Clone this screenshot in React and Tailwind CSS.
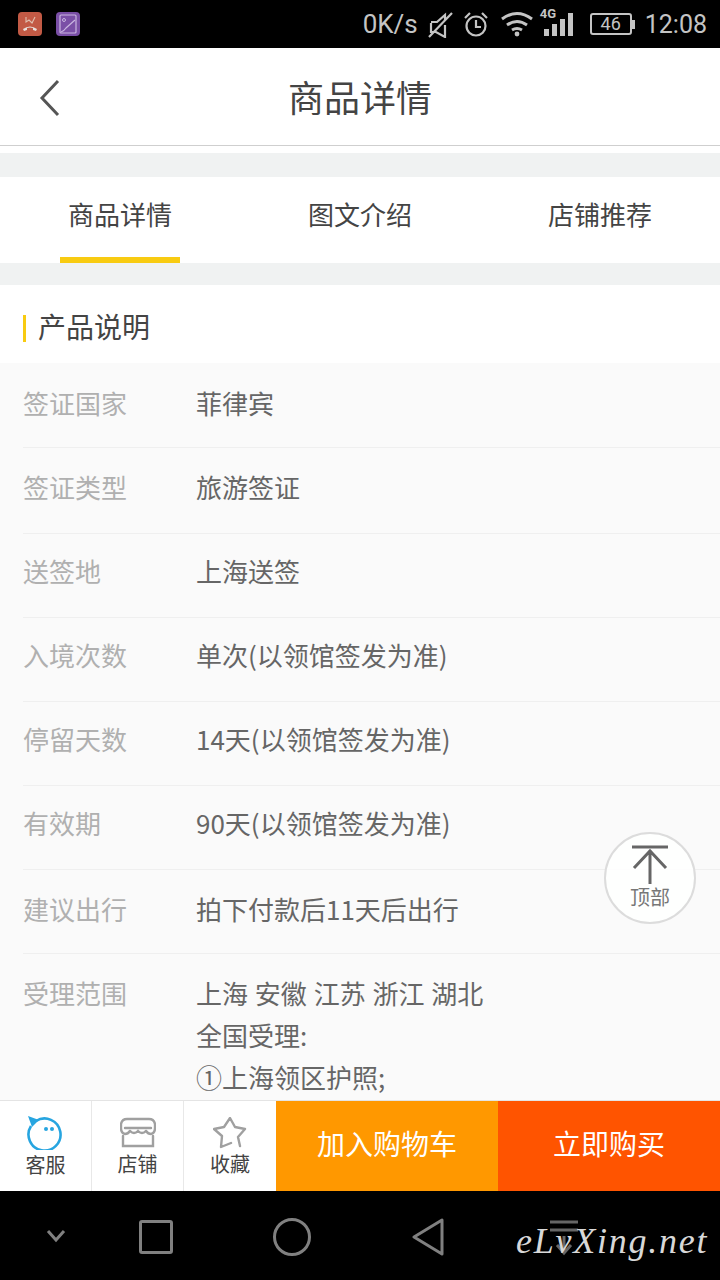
import React from "react";

const font = { fontFamily: '"Noto Sans CJK SC", "Noto Sans", sans-serif' };

const rows = [
  { label: "签证国家", lines: ["菲律宾"], box: "h-[85px] pt-[26px] border-b" },
  { label: "签证类型", lines: ["旅游签证"], box: "h-[86px] pt-[25px] border-b" },
  { label: "送签地", lines: ["上海送签"], box: "h-[84px] pt-[23px] border-b" },
  { label: "入境次数", lines: ["单次(以领馆签发为准)"], box: "h-[84px] pt-[23px] border-b" },
  { label: "停留天数", lines: ["14天(以领馆签发为准)"], box: "h-[84px] pt-[23px] border-b" },
  { label: "有效期", lines: ["90天(以领馆签发为准)"], box: "h-[84px] pt-[23px] border-b" },
  { label: "建议出行", lines: ["拍下付款后11天后出行"], box: "h-[84px] pt-[25px] border-b" },
  { label: "受理范围", lines: ["上海 安徽 江苏 浙江 湖北", "全国受理:", "①上海领区护照;"], box: "pt-[25px]" },
];

function StatusBar() {
  return (
    <div className="h-12 shrink-0 bg-black flex items-center justify-between pl-[18px] pr-[13px]">
      <div className="flex gap-[14px]">
        <svg width="24" height="24" viewBox="0 0 24 24">
          <rect width="24" height="24" rx="4" fill="#c25a45" />
          <path d="M5 17q7-5 14 0l-1 2-3-1v-2q-3-1-6 0v2l-3 1z" fill="#e8e0dc" />
          <path d="M8 5v5l3-2 3 3 3-6" stroke="#e0c0b0" strokeWidth="1.1" fill="none" />
        </svg>
        <svg width="24" height="24" viewBox="0 0 24 24">
          <rect width="24" height="24" rx="4" fill="#7a4fa6" />
          <rect x="4" y="3" width="16" height="18" rx="1" fill="none" stroke="#c9b5e0" strokeWidth="1.2" />
          <path d="M5 20q3-1 5-4l9-8" fill="none" stroke="#c9b5e0" strokeWidth="1.2" />
          <circle cx="8" cy="8" r="1.5" fill="none" stroke="#c9b5e0" />
        </svg>
      </div>
      <div className="flex items-center text-[#c4c4c4]">
        <span className="text-[26px] leading-none font-['Roboto'] mr-[10px]">0K/s</span>
        <svg width="25" height="28" viewBox="0 0 25 28" fill="none" stroke="#c4c4c4" strokeWidth="2.2" className="mr-[10px]">
          <path d="M3 13v9h5l9 5V15M17 10V5l-8 7H3M1 27L24 3" />
        </svg>
        <svg width="26" height="28" viewBox="0 0 26 28" fill="none" stroke="#c4c4c4" strokeWidth="2.2" className="mr-[11px]">
          <circle cx="13" cy="16" r="9.5" />
          <path d="M13 10v7h5M2 8l5-5M24 8l-5-5" />
        </svg>
        <svg width="34" height="26" viewBox="0 0 34 26" fill="none" stroke="#c4c4c4" strokeWidth="3" className="mr-[6px]">
          <path d="M2 8q15-11 30 0M7 14q10-7 20 0M12 19q5-3 10 0" />
          <circle cx="17" cy="23" r="2.4" fill="#c4c4c4" stroke="none" />
        </svg>
        <div className="relative w-[34px] h-[28px] mb-[4px] mr-[16px]">
          <span className="absolute -top-[1px] left-0 text-[13px] leading-none font-bold font-['Roboto']">4G</span>
          <div className="absolute bottom-0 left-[4px] flex items-end gap-[3px]">
            <div className="w-[5px] h-[7px] bg-[#c4c4c4]" />
            <div className="w-[5px] h-[12px] bg-[#c4c4c4]" />
            <div className="w-[5px] h-[17px] bg-[#c4c4c4]" />
            <div className="w-[5px] h-[23px] bg-[#c4c4c4]" />
          </div>
        </div>
        <div className="w-[42px] h-[22px] border-2 border-[#c4c4c4] rounded-[3px] flex items-center justify-center text-[18px] leading-none font-['Roboto']">46</div>
        <div className="w-[3px] h-[9px] bg-[#c4c4c4] mr-[10px]" />
        <span className="text-[25px] leading-none font-['Roboto']">12:08</span>
      </div>
    </div>
  );
}

function Header() {
  return (
    <div className="h-[98px] shrink-0 bg-white border-b border-[#cfcfcf] flex items-center justify-center relative pb-[1px]">
      <svg width="24" height="38" viewBox="0 0 24 38" fill="none" stroke="#555" strokeWidth="3" className="absolute left-[38px] top-[31px]">
        <path d="M20 2L4 19l16 17" />
      </svg>
      <span className="text-[36px] leading-none text-[#444]">商品详情</span>
    </div>
  );
}

function Tabs() {
  return (
    <div className="h-[86px] shrink-0 bg-white flex">
      {["商品详情", "图文介绍", "店铺推荐"].map((t, i) => (
        <div key={t} className="flex-1 flex flex-col items-center justify-between">
          <span className="text-[26px] leading-none text-[#444] mt-[24px]">{t}</span>
          {i === 0 ? <div className="w-[120px] h-[6px] bg-[#f8cb11]" /> : null}
        </div>
      ))}
    </div>
  );
}

function Row({ label, lines, box }) {
  return (
    <div className={"flex ml-[23px] border-[#efefef] " + box}>
      <div className="w-[173px] shrink-0 text-[26px] leading-[28px] text-[#b0b0b0]">{label}</div>
      <div className="text-[26px] text-[#666] [word-spacing:1px]">
        {lines.map((l) => (
          <div key={l} className="leading-[28px] h-[42px]">{l}</div>
        ))}
      </div>
    </div>
  );
}

function BottomBar() {
  return (
    <div className="h-[91px] shrink-0 flex bg-white border-t border-[#e4e4e4] relative z-10">
      <div className="w-[92px] border-r border-[#e8e8e8] flex flex-col items-center pt-[15px]">
        <svg width="38" height="34" viewBox="0 0 38 34" fill="none">
          <path d="M9 5a16 16 0 1 1-5 5" stroke="#27a5e0" strokeWidth="2.6" />
          <path d="M1 0l11 4-7 7z" fill="#27a5e0" />
          <circle cx="19" cy="13" r="2" fill="#27a5e0" />
          <circle cx="25" cy="13" r="2" fill="#27a5e0" />
        </svg>
        <span className="text-[20px] leading-none text-[#444] mt-[5px]">客服</span>
      </div>
      <div className="w-[92px] border-r border-[#e8e8e8] flex flex-col items-center pt-[16px]">
        <svg width="36" height="31" viewBox="0 0 36 31" fill="none" stroke="#a0a0a0" strokeWidth="2.4" strokeLinecap="round">
          <path d="M7 2h22q5 0 6 5v4q0 5-4 6-3 0-5-3M7 2q-5 0-6 5v4q0 5 4 6 3 0 5-3" />
          <path d="M5 11h26M10 14q4 4 8 0q4 4 8 0M3 19v10h30V19" />
        </svg>
        <span className="text-[20px] leading-none text-[#444] mt-[6px]">店铺</span>
      </div>
      <div className="w-[92px] flex flex-col items-center pt-[16px]">
        <svg width="34" height="32" viewBox="0 0 34 32" fill="none" stroke="#a0a0a0" strokeWidth="2.4" strokeLinejoin="round" strokeLinecap="round">
          <path d="M18 26L8 30l1-11-8-7 10-2 6-9 5 9 10 2-7 8 2 9" />
        </svg>
        <span className="text-[20px] leading-none text-[#444] mt-[5px]">收藏</span>
      </div>
      <div className="w-[222px] bg-[#ff9800] flex items-center justify-center text-white text-[28px] leading-none pb-[6px]">加入购物车</div>
      <div className="w-[222px] bg-[#ff5400] flex items-center justify-center text-white text-[28px] leading-none pb-[6px]">立即购买</div>
    </div>
  );
}

function NavBar() {
  return (
    <div className="h-[89px] shrink-0 bg-black relative">
      <svg width="20" height="14" viewBox="0 0 20 14" fill="none" stroke="#808080" strokeWidth="3" className="absolute left-[46px] top-[38px]">
        <path d="M2 2l8 9 8-9" />
      </svg>
      <div className="absolute left-[139px] top-[29px] w-[34px] h-[34px] border-[3px] border-[#808080] rounded-[3px]" />
      <div className="absolute left-[273px] top-[27px] w-[38px] h-[38px] border-[3px] border-[#808080] rounded-full" />
      <svg width="34" height="38" viewBox="0 0 34 38" fill="none" stroke="#808080" strokeWidth="3" strokeLinejoin="round" className="absolute left-[411px] top-[27px]">
        <path d="M31 2v34L3 19z" />
      </svg>
      <svg width="30" height="36" viewBox="0 0 30 36" fill="none" stroke="#666" strokeWidth="3" className="absolute left-[550px] top-[29px]">
        <path d="M0 2h28M0 10h28M14 16v16M7 25l7 8 7-8" />
      </svg>
      <span className="absolute left-[516px] top-[26px] text-[36px] leading-[48px] italic text-[#d8d8d8] tracking-[1.75px] font-['Liberation_Serif']">eLvXing.net</span>
    </div>
  );
}

export default function App() {
  return (
    <div className="w-[720px] h-[1280px] flex flex-col overflow-hidden bg-white relative" style={font}>
      <StatusBar />
      <Header />
      <div className="h-[7px] shrink-0 bg-white" />
      <div className="h-[24px] shrink-0 bg-[#f0f2f2]" />
      <Tabs />
      <div className="h-[22px] shrink-0 bg-[#f0f2f2]" />
      <div className="h-[78px] shrink-0 bg-white flex items-center pt-[8px]">
        <div className="w-[3px] h-[27px] bg-[#f8cb11] ml-[23px] mr-[12px]" />
        <span className="text-[28px] leading-none text-[#444] mb-[4px]">产品说明</span>
      </div>
      <div className="flex-1 min-h-0 overflow-hidden bg-[#fafafa]">
        {rows.map((r) => (
          <Row key={r.label} label={r.label} lines={r.lines} box={r.box} />
        ))}
      </div>
      <BottomBar />
      <NavBar />
      <div className="absolute left-[604px] top-[832px] w-[92px] h-[92px] rounded-full border-2 border-[#dcdcdc] bg-white/90 flex flex-col items-center pt-[10px]">
        <svg width="40" height="40" viewBox="0 0 40 40" fill="none" stroke="#666" strokeWidth="3">
          <path d="M2 3h36M20 40V6M4 24L20 7l16 17" />
        </svg>
        <span className="text-[20px] leading-none text-[#777] mt-[3px]">顶部</span>
      </div>
    </div>
  );
}
